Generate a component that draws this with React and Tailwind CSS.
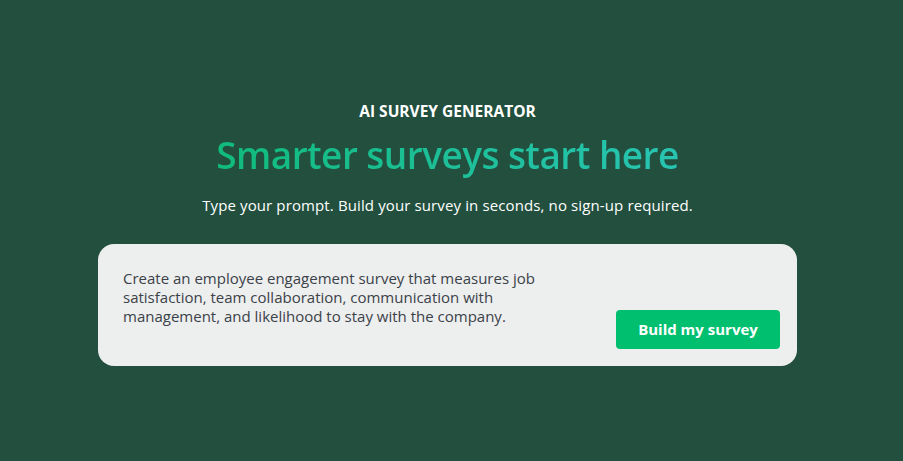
import React from 'react';

const App = () => {
  return (
    <div className="min-h-[461px] w-full bg-[#224f3e] flex flex-col items-center pt-[101px] pr-[8px]" style={{ fontFamily: '"Open Sans", "Noto Sans", sans-serif' }}>
      <p className="text-[15.5px] font-bold text-white leading-5">AI SURVEY GENERATOR</p>
      <h1 className="mt-[10px] text-[37px] font-semibold leading-[48px] tracking-[-0.015em] bg-gradient-to-r from-[#10bb7c] to-[#28c4b2] bg-clip-text text-transparent">
        Smarter surveys start here
      </h1>
      <p className="mt-[16px] text-[15px] text-white leading-5 tracking-[0.008em]">
        Type your prompt. Build your survey in seconds, no sign-up required.
      </p>

      <div className="mt-[29px] w-[699px] h-[122px] rounded-2xl bg-[#edeeee] flex justify-between pl-[25px] pr-[17px] pt-[25px] pb-[17px]">
        <p className="w-[440px] text-[15px] leading-[19px] text-[#3b4249]">
          Create an employee engagement survey that measures job satisfaction, team collaboration, communication with management, and likelihood to stay with the company.
        </p>
        <button className="self-end w-[164px] h-[39px] rounded bg-[#00bf6f] text-white text-[15px] font-bold">
          Build my survey
        </button>
      </div>
    </div>
  );
};

export default App;
